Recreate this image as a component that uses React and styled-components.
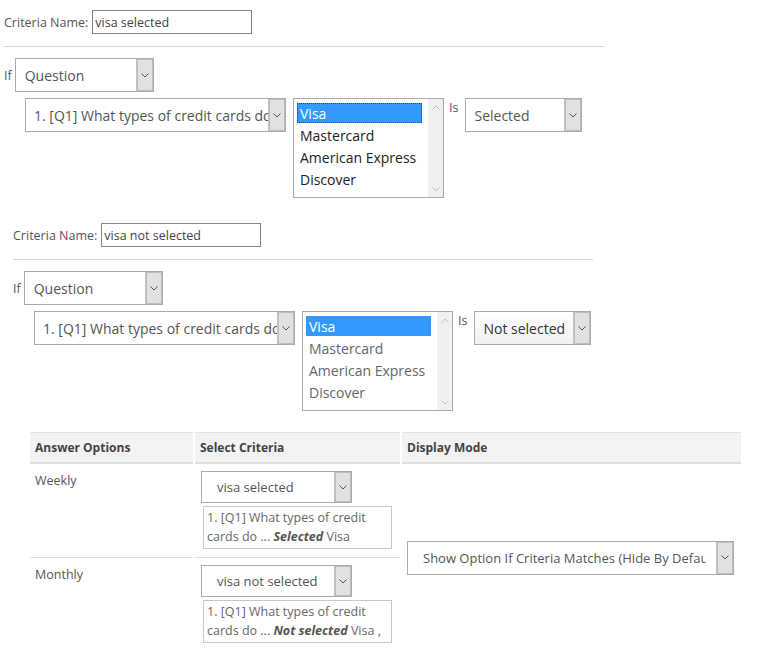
import React from 'react'
import styled, { createGlobalStyle } from 'styled-components'

const GlobalStyle = createGlobalStyle`
  html, body { margin: 0; padding: 0; background: #fff; }
  body { font-family: "Open Sans", "Noto Sans", sans-serif; color: #555; }
`

const Page = styled.div`
  width: 761px;
  height: 662px;
  overflow: hidden;
`

const Section = styled.div`
  padding-left: ${p => p.$indent}px;
  padding-top: ${p => p.$top}px;
`

const NameRow = styled.div`
  display: flex;
  align-items: center;
  gap: 4px;
  font-size: 12.5px;
`

const NameInput = styled.div`
  box-sizing: border-box;
  width: 160px;
  height: 24px;
  border: 1px solid #858585;
  padding: 0 2px;
  display: flex;
  align-items: center;
  font-size: 12.5px;
  color: #444;
`

const Divider = styled.div`
  width: ${p => p.$width}px;
  border-top: 1px solid #d6d6d6;
  margin: 12px 0 11px;
`

const IfRow = styled.div`
  display: flex;
  align-items: center;
  gap: 3px;
  font-size: 12.5px;
`

const ConditionRow = styled.div`
  display: flex;
  align-items: flex-start;
  margin: 6px 0 0 21px;
`

const IsLabel = styled.span`
  font-size: 12.5px;
  margin: 1px 7px 0 5px;
`

const SelectBox = styled.div`
  box-sizing: border-box;
  display: flex;
  width: ${p => p.$w}px;
  height: ${p => p.$h || 34}px;
  border: 1px solid #ababab;
  background: ${p => (p.$shade ? 'linear-gradient(#fff, #f1f1f1)' : '#fff')};
  flex-shrink: 0;
`

const SelectText = styled.span`
  flex: 1;
  display: flex;
  align-items: center;
  padding-left: ${p => p.$pad}px;
  margin-right: ${p => p.$gapRight || 0}px;
  white-space: nowrap;
  overflow: hidden;
  font-size: ${p => p.$size || 14}px;
  color: ${p => (p.$dark ? '#333' : '#555')};
`

const ArrowBox = styled.span`
  width: 16px;
  flex-shrink: 0;
  background: #e1e1e1;
  border-left: 1px solid #c4c4c4;
  box-shadow: inset 0 0 0 1px #bdbdbd;
  display: flex;
  align-items: center;
  justify-content: center;
`

const Chevron = () => (
  <svg width="8" height="5" viewBox="0 0 8 5">
    <polyline points="0.5,0.5 4,4 7.5,0.5" fill="none" stroke="#555" strokeWidth="1" />
  </svg>
)

const Select = ({ w, h, pad, gapRight, size, dark, shade, children }) => (
  <SelectBox $w={w} $h={h} $shade={shade}>
    <SelectText $pad={pad} $gapRight={gapRight} $size={size} $dark={dark}>
      {children}
    </SelectText>
    <ArrowBox><Chevron /></ArrowBox>
  </SelectBox>
)

const ListBox = styled.div`
  box-sizing: border-box;
  width: 151px;
  height: 100px;
  border: 1px solid #ababab;
  display: flex;
  margin-left: 7px;
  flex-shrink: 0;
`

const ListItems = styled.div`
  flex: 1;
  padding: 4px 6px 0 3px;
`

const ListItem = styled.div`
  height: 20px;
  margin-bottom: 2px;
  padding-left: 3px;
  display: flex;
  align-items: center;
  font-size: 14px;
  color: ${p => (p.$selected ? '#fff' : p.$dark ? '#222' : '#666')};
  background: ${p => (p.$selected ? '#3399ff' : 'transparent')};
  outline: ${p => (p.$focus ? '1px dotted #1c4f8a' : 'none')};
  outline-offset: -1px;
`

const ScrollTrack = styled.div`
  width: 15px;
  background: #f0f0f0;
  display: flex;
  flex-direction: column;
  justify-content: space-between;
  align-items: center;
  padding: 6px 0 5px;
`

const ScrollArrow = ({ up }) => (
  <svg width="8" height="5" viewBox="0 0 8 5">
    <polyline
      points={up ? '0.5,4.5 4,1 7.5,4.5' : '0.5,0.5 4,4 7.5,0.5'}
      fill="none"
      stroke="#c2c2c2"
      strokeWidth="1"
    />
  </svg>
)

const cards = ['Visa', 'Mastercard', 'American Express', 'Discover']

const CardList = ({ focus, dark }) => (
  <ListBox>
    <ListItems>
      {cards.map((c, i) => (
        <ListItem key={c} $selected={i === 0} $focus={focus && i === 0} $dark={dark}>
          {c}
        </ListItem>
      ))}
    </ListItems>
    <ScrollTrack>
      <ScrollArrow up />
      <ScrollArrow />
    </ScrollTrack>
  </ListBox>
)

const CriteriaBlock = ({ indent, top, divider, name, isValue, listFocus, listDark, isDark }) => (
  <Section $indent={indent} $top={top}>
    <NameRow>
      <span>Criteria Name:</span>
      <NameInput>{name}</NameInput>
    </NameRow>
    <Divider $width={divider} />
    <IfRow>
      <span>If</span>
      <Select w={139} pad={9}>Question</Select>
    </IfRow>
    <ConditionRow>
      <Select w={261} pad={8}>1. [Q1] What types of credit cards do you use?</Select>
      <CardList focus={listFocus} dark={listDark} />
      <IsLabel>Is</IsLabel>
      <Select w={117} pad={8} dark={isDark} shade={isDark}>{isValue}</Select>
    </ConditionRow>
  </Section>
)

const TableWrap = styled.div`
  padding: 21px 0 0 28px;
`

const Table = styled.table`
  border-collapse: separate;
  border-spacing: 2px 0;
  font-size: 12.5px;
  color: #555;
`

const HeadCell = styled.th`
  width: ${p => p.$w}px;
  box-sizing: border-box;
  height: 32px;
  text-align: left;
  padding: 0 0 0 5px;
  background: #f3f3f3;
  border-top: 1px solid #e2e2e2;
  border-bottom: 2px solid #dedede;
  font-weight: 700;
  font-size: 12px;
  color: #444;
`

const Cell = styled.td`
  vertical-align: ${p => (p.$middle ? 'middle' : 'top')};
  padding: ${p => p.$pad || '7px 0 8px 5px'};
  border-bottom: ${p => (p.$line ? '1px solid #dedede' : 'none')};
`

const OptionLabel = styled.div`
  padding-top: 1px;
`

const CriteriaSummary = styled.div`
  box-sizing: border-box;
  width: 189px;
  margin: 3px 0 0 2px;
  border: 1px solid #c8c8c8;
  padding: 1px 3px 2px;
  line-height: 19px;
  font-size: 12.5px;
  color: #666;
  b {
    font-style: italic;
    color: #555;
  }
`

const rows = [
  { label: 'Weekly', crit: 'visa selected', state: 'Selected', tail: 'Visa' },
  { label: 'Monthly', crit: 'visa not selected', state: 'Not selected', tail: 'Visa ,' },
]

export default function App() {
  return (
    <Page>
      <GlobalStyle />
      <CriteriaBlock
        indent={4}
        top={10}
        divider={600}
        name="visa selected"
        isValue="Selected"
        listFocus
        listDark
      />
      <CriteriaBlock
        indent={13}
        top={25}
        divider={580}
        name="visa not selected"
        isValue="Not selected"
        isDark
      />
      <TableWrap>
        <Table>
          <thead>
            <tr>
              <HeadCell $w={163}>Answer Options</HeadCell>
              <HeadCell $w={205}>Select Criteria</HeadCell>
              <HeadCell $w={339}>Display Mode</HeadCell>
            </tr>
          </thead>
          <tbody>
            {rows.map((r, i) => (
              <tr key={r.label}>
                <Cell $line={i === 0}>
                  <OptionLabel>{r.label}</OptionLabel>
                </Cell>
                <Cell $line={i === 0} $pad="7px 0 8px 6px">
                  <Select w={151} h={32} pad={15} size={13}>{r.crit}</Select>
                  <CriteriaSummary>
                    1. [Q1] What types of credit cards do ... <b>{r.state}</b> {r.tail}
                  </CriteriaSummary>
                </Cell>
                {i === 0 && (
                  <Cell rowSpan={2} $middle $pad="0 0 0 5px">
                    <Select w={327} h={34} pad={15} gapRight={10} size={13}>
                      Show Option If Criteria Matches (Hide By Default)
                    </Select>
                  </Cell>
                )}
              </tr>
            ))}
          </tbody>
        </Table>
      </TableWrap>
    </Page>
  )
}
